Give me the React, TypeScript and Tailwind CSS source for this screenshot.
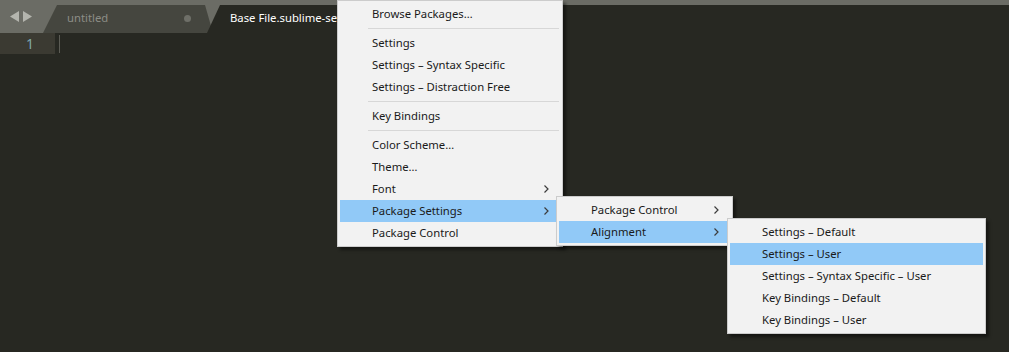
import React from 'react';

type Item = { label: string; sub?: boolean; active?: boolean } | 'sep';

const font = { fontFamily: '"Noto Sans", "Open Sans", sans-serif' };

function Chevron() {
  return (
    <svg width="5" height="8" viewBox="0 0 5 8" className="ml-auto mr-[11px]">
      <path d="M0.5 0.5 L4 4 L0.5 7.5" fill="none" stroke="#3c3c3c" strokeWidth="1.2" />
    </svg>
  );
}

function Menu({ items, className }: { items: Item[]; className: string }) {
  return (
    <div
      className={`absolute flex flex-col bg-[#f2f2f2] border border-[#cccccc] p-[2px] shadow-[3px_3px_3px_rgba(0,0,0,0.45)] ${className}`}
      style={font}
    >
      {items.map((it, i) =>
        it === 'sep' ? (
          <div key={i} className="h-[7px] flex items-center pl-[28px] pr-[1px]">
            <div className="h-px w-full bg-[#d7d7d7]" />
          </div>
        ) : (
          <div
            key={i}
            className={`h-[22px] flex items-center pl-[32px] text-[11.3px] text-[#1a1a1a] ${
              it.active ? 'bg-[#91c9f7]' : ''
            }`}
          >
            {it.label}
            {it.sub && <Chevron />}
          </div>
        )
      )}
    </div>
  );
}

export default function App() {
  return (
    <div className="relative w-[1009px] h-[352px] bg-[#272822] overflow-hidden" style={font}>
      {/* Tab bar */}
      <div className="h-[33px] bg-[#6b6c65] flex items-end">
        <div className="w-[43px] h-full flex items-center pl-[10px] gap-[4px]">
          <svg width="9" height="11" viewBox="0 0 9 11">
            <path d="M9 0 L0 5.5 L9 11 Z" fill="#b4b5ae" />
          </svg>
          <svg width="9" height="11" viewBox="0 0 9 11">
            <path d="M0 0 L9 5.5 L0 11 Z" fill="#b4b5ae" />
          </svg>
        </div>
        <div className="w-[170px] h-[28px] bg-[#45463f] [clip-path:polygon(0_100%,14px_0,162px_0,100%_100%)] flex items-center pl-[24px] pr-[22px] pb-[2px]">
          <span className="text-[11.3px] text-[#8c8d86]">untitled</span>
          <span className="ml-auto w-[7px] h-[7px] rounded-full bg-[#6e6f68]" />
        </div>
        <div className="flex-1 -ml-[6px] h-[28px] bg-[#272822] [clip-path:polygon(0_100%,13px_0,100%_0,100%_100%)] flex items-center pl-[23px] pb-[2px]">
          <span className="text-[11.3px] text-white">Base File.sublime-settings</span>
        </div>
      </div>

      {/* Editor */}
      <div className="flex">
        <div className="w-[55px] h-[21px] bg-[#3b3a32] text-right pr-[21px] text-[14px] leading-[21px] text-[#7fa8ab]">
          1
        </div>
        <div className="ml-[4px] mt-[2px] w-px h-[18px] bg-[#5c5c55]" />
      </div>

      <Menu
        className="left-[337px] top-0 w-[226px]"
        items={[
          { label: 'Browse Packages…' },
          'sep',
          { label: 'Settings' },
          { label: 'Settings – Syntax Specific' },
          { label: 'Settings – Distraction Free' },
          'sep',
          { label: 'Key Bindings' },
          'sep',
          { label: 'Color Scheme…' },
          { label: 'Theme…' },
          { label: 'Font', sub: true },
          { label: 'Package Settings', sub: true, active: true },
          { label: 'Package Control' },
        ]}
      />
      <Menu
        className="left-[556px] top-[196px] w-[177px]"
        items={[
          { label: 'Package Control', sub: true },
          { label: 'Alignment', sub: true, active: true },
        ]}
      />
      <Menu
        className="left-[727px] top-[218px] w-[259px]"
        items={[
          { label: 'Settings – Default' },
          { label: 'Settings – User', active: true },
          { label: 'Settings – Syntax Specific – User' },
          { label: 'Key Bindings – Default' },
          { label: 'Key Bindings – User' },
        ]}
      />
    </div>
  );
}
